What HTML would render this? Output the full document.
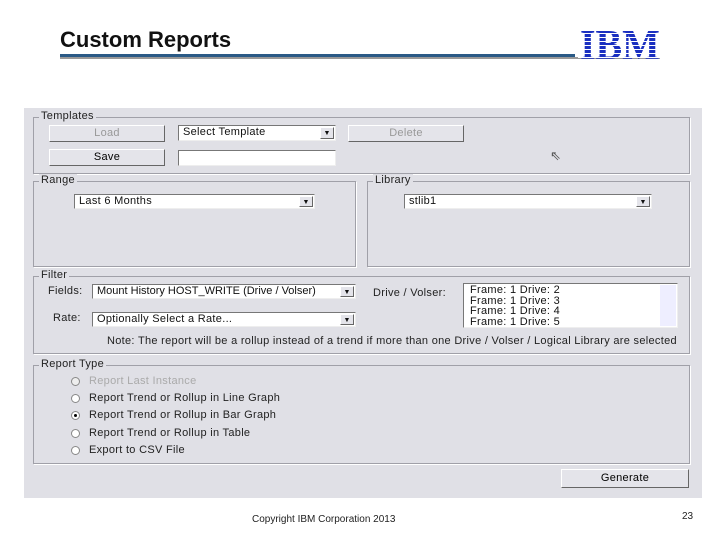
<!DOCTYPE html>
<html><head><style>
body{margin:0;width:720px;height:540px;background:#fff;position:relative;overflow:hidden;font-family:"Liberation Sans",sans-serif}
.a{position:absolute}
.p{font-size:11px;letter-spacing:.3px;color:#222;white-space:nowrap}
.g{position:absolute;border:1px solid #a0a0a8;box-shadow:1px 1px 0 #fff}
.lg{position:absolute;background:#e0e0e6;padding:0 2px;font-size:11px;letter-spacing:.3px;color:#222;top:-8px;left:5px}
.btn{position:absolute;background:#e4e4ea;border:1px solid;border-color:#fff #666 #666 #fff;font-size:11px;letter-spacing:.3px;text-align:center;box-sizing:border-box;line-height:15px}
.dd{position:absolute;background:#fff;border:1px solid;border-color:#777 #eee #eee #777;box-sizing:border-box;font-size:11px;letter-spacing:.3px;padding-left:4px;line-height:13px;color:#111;white-space:nowrap;overflow:hidden}
.ar{position:absolute;right:1px;top:1px;bottom:1px;width:14px;background:#e4e4ea;border:1px solid;border-color:#fff #666 #666 #fff;box-sizing:border-box;font-size:7px;text-align:center;line-height:11px;letter-spacing:0}
.r{position:absolute;width:9px;height:9px;border-radius:50%;background:#fff;border:1px solid #888;box-sizing:border-box}
</style></head><body>
<div class="a" style="left:60px;top:27px;font-size:22px;font-weight:bold;color:#111">Custom Reports</div>
<div class="a" style="left:60px;top:54px;width:515px;height:3px;background:#2a5a86"></div>
<div class="a" style="left:60px;top:57px;width:600px;height:2px;background:#999"></div>
<div class="a" style="left:580px;top:25px;width:84px;font:bold 42px/42px 'Liberation Serif',serif;color:#1a2fc0;transform:scaleX(.95);transform-origin:left">IBM</div>
<div class="a" style="left:578px;top:30px;width:86px;height:29px;background:repeating-linear-gradient(transparent 0 3px,#fff 3px 4px)"></div>

<div class="a" style="left:24px;top:108px;width:678px;height:390px;background:#e0e0e6"></div>

<div class="g" style="left:33px;top:117px;width:655px;height:55px"><span class="lg">Templates</span></div>
<div class="btn" style="left:49px;top:125px;width:116px;height:17px;color:#999">Load</div>
<div class="dd" style="left:178px;top:125px;width:158px;height:16px">Select Template<div class="ar">▼</div></div>
<div class="btn" style="left:348px;top:125px;width:116px;height:17px;color:#999">Delete</div>
<div class="btn" style="left:49px;top:149px;width:116px;height:17px">Save</div>
<div class="dd" style="left:178px;top:150px;width:158px;height:16px"></div>
<div class="a" style="left:550px;top:148px;font-size:13px;color:#555">⇖</div>

<div class="g" style="left:33px;top:181px;width:321px;height:84px"><span class="lg">Range</span></div>
<div class="dd" style="left:74px;top:194px;width:241px;height:15px">Last 6 Months<div class="ar">▼</div></div>
<div class="g" style="left:367px;top:181px;width:321px;height:84px"><span class="lg">Library</span></div>
<div class="dd" style="left:404px;top:194px;width:248px;height:15px">stlib1<div class="ar">▼</div></div>

<div class="g" style="left:33px;top:276px;width:655px;height:76px"><span class="lg">Filter</span></div>
<div class="a p" style="left:48px;top:285px">Fields:</div>
<div class="dd" style="left:92px;top:284px;width:264px;height:15px;letter-spacing:0">Mount History  HOST_WRITE (Drive / Volser)<div class="ar">▼</div></div>
<div class="a p" style="left:53px;top:312px">Rate:</div>
<div class="dd" style="left:92px;top:312px;width:264px;height:15px">Optionally Select a Rate...<div class="ar">▼</div></div>
<div class="a p" style="left:373px;top:287px">Drive / Volser:</div>
<div class="dd" style="left:463px;top:283px;width:215px;height:45px;line-height:10.5px;padding-left:6px;padding-top:1px">Frame: 1  Drive: 2<br>Frame: 1  Drive: 3<br>Frame: 1  Drive: 4<br>Frame: 1  Drive: 5
<div class="a" style="right:1px;top:1px;bottom:1px;width:16px;background:#eef"></div></div>
<div class="a p" style="left:107px;top:335px">Note: The report will be a rollup instead of a trend if more than one Drive / Volser / Logical Library are selected</div>

<div class="g" style="left:33px;top:365px;width:655px;height:97px"><span class="lg">Report Type</span></div>
<div class="r" style="left:71px;top:377px;background:#eee"></div><div class="a p" style="left:89px;top:375px;color:#aaa">Report Last Instance</div>
<div class="r" style="left:71px;top:394px"></div><div class="a p" style="left:89px;top:392px">Report Trend or Rollup in Line Graph</div>
<div class="r" style="left:71px;top:411px"><div class="a" style="left:2px;top:2px;width:3px;height:3px;background:#000;border-radius:50%"></div></div><div class="a p" style="left:89px;top:409px">Report Trend or Rollup in Bar Graph</div>
<div class="r" style="left:71px;top:429px"></div><div class="a p" style="left:89px;top:427px">Report Trend or Rollup in Table</div>
<div class="r" style="left:71px;top:446px"></div><div class="a p" style="left:89px;top:444px">Export to CSV File</div>
<div class="btn" style="left:561px;top:469px;width:128px;height:19px;line-height:17px">Generate</div>

<div class="a" style="left:252px;top:514px;font-size:10px;color:#222">Copyright IBM Corporation 2013</div>
<div class="a" style="left:682px;top:511px;font-size:10px;color:#222">23</div>
</body></html>
